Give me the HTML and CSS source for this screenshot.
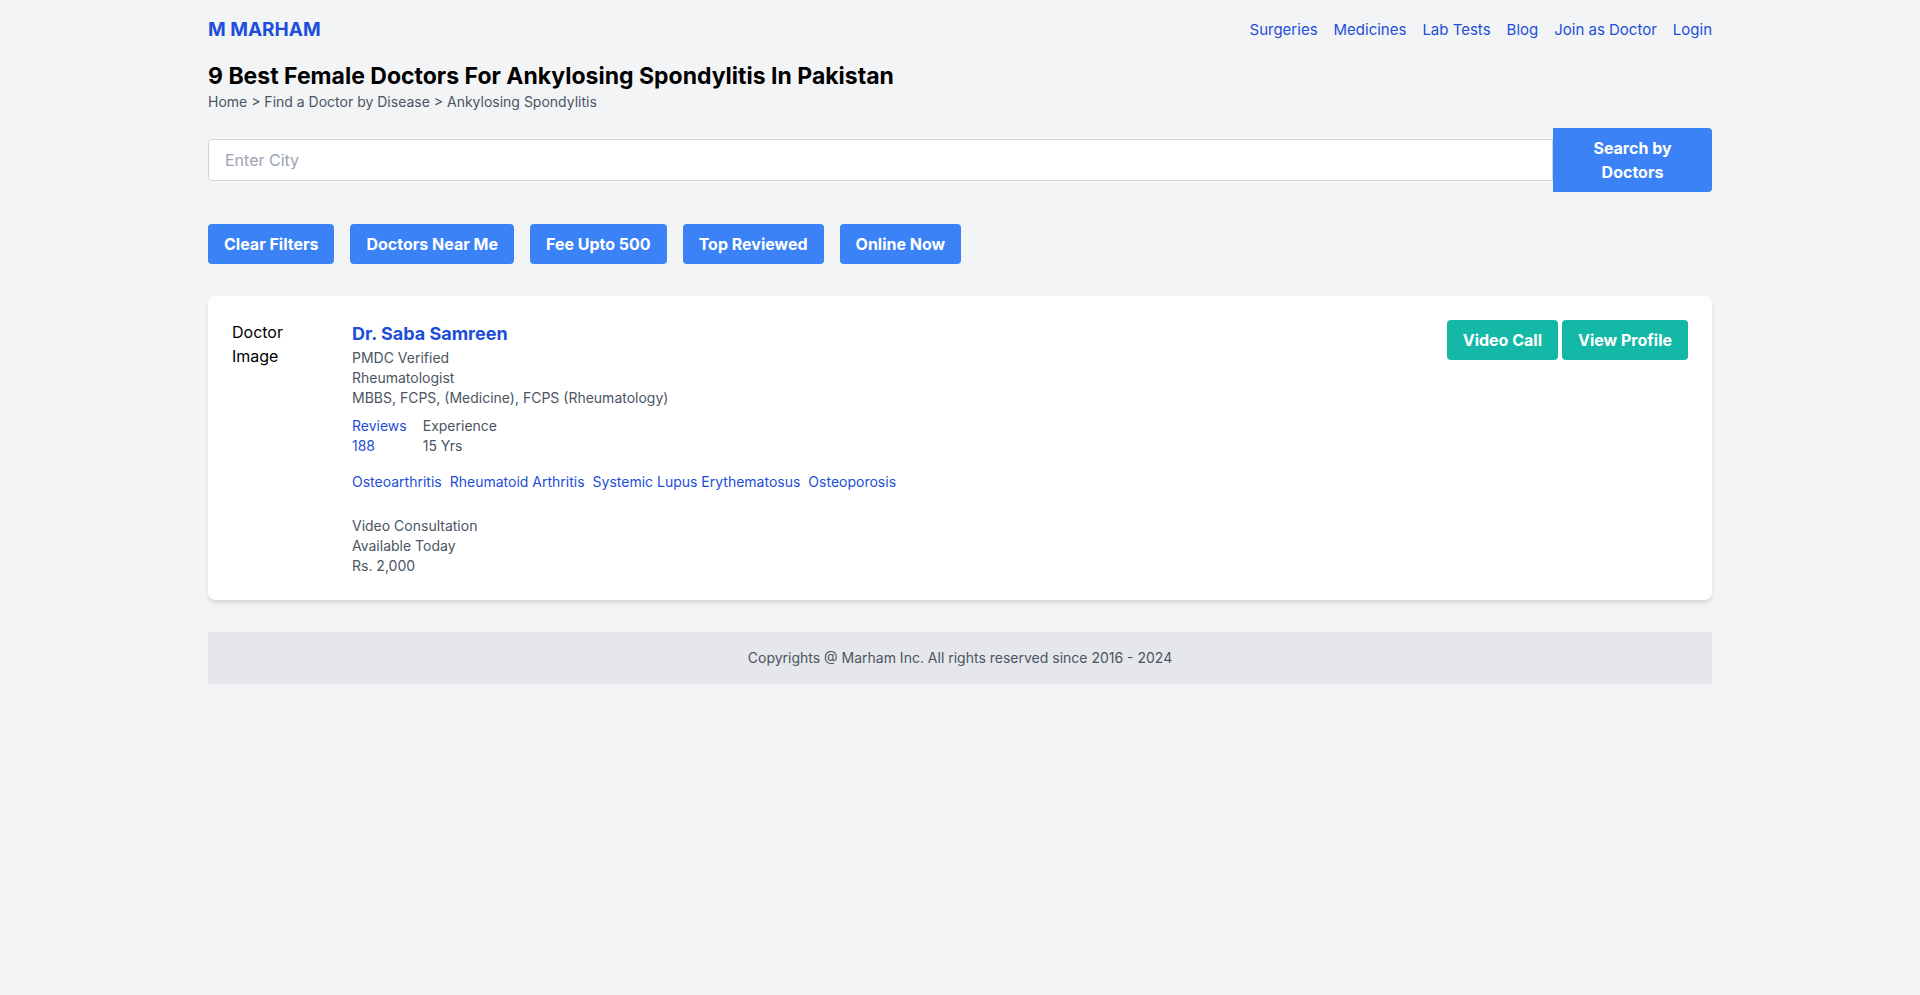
FILE: index.html
```html
<!DOCTYPE html>
<html lang="en">
<head>
<meta charset="utf-8">
<title>Marham</title>
<link rel="stylesheet" href="styles.css">
</head>
<body>
<div class="container">
  <header class="header">
    <a class="logo" href="#">M MARHAM</a>
    <nav class="nav">
      <a href="#">Surgeries</a>
      <a href="#">Medicines</a>
      <a href="#">Lab Tests</a>
      <a href="#">Blog</a>
      <a href="#">Join as Doctor</a>
      <a href="#">Login</a>
    </nav>
  </header>
  <main>
    <h1 class="title">9 Best Female Doctors For Ankylosing Spondylitis In Pakistan</h1>
    <p class="small">Home &gt; Find a Doctor by Disease &gt; Ankylosing Spondylitis</p>
    <form class="search">
      <input class="search-input" type="text" placeholder="Enter City" aria-label="Enter City">
      <button class="search-button" type="button">Search by Doctors</button>
    </form>
    <div class="filters">
      <button class="btn" type="button">Clear Filters</button>
      <button class="btn" type="button">Doctors Near Me</button>
      <button class="btn" type="button">Fee Upto 500</button>
      <button class="btn" type="button">Top Reviewed</button>
      <button class="btn" type="button">Online Now</button>
    </div>
    <article class="card">
      <div class="photo">Doctor Image</div>
      <div class="info">
        <h2 class="name">Dr. Saba Samreen</h2>
        <p class="small">PMDC Verified</p>
        <p class="small">Rheumatologist</p>
        <p class="small">MBBS, FCPS, (Medicine), FCPS (Rheumatology)</p>
        <div class="stats">
          <div class="small"><a href="#">Reviews<br>188</a></div>
          <div class="small">Experience<br>15 Yrs</div>
        </div>
        <div class="tags small">
          <a href="#">Osteoarthritis</a>
          <a href="#">Rheumatoid Arthritis</a>
          <a href="#">Systemic Lupus Erythematosus</a>
          <a href="#">Osteoporosis</a>
        </div>
        <div class="consult small">
          <p>Video Consultation</p>
          <p>Available Today</p>
          <p>Rs. 2,000</p>
        </div>
      </div>
      <div class="actions">
        <button class="btn btn-teal" type="button">Video Call</button>
        <button class="btn btn-teal" type="button">View Profile</button>
      </div>
    </article>
  </main>
  <footer class="footer small">Copyrights @ Marham Inc. All rights reserved since 2016 - 2024</footer>
</div>
</body>
</html>
```

FILE: styles.css
```css
*, *::before, *::after {
  box-sizing: border-box;
}

body {
  margin: 0;
  background: #f3f4f6;
  color: #000;
  font-family: Inter, "Liberation Sans", sans-serif;
  font-size: 16px;
  line-height: 24px;
}

h1, h2, p {
  margin: 0;
}

a {
  color: #1d4ed8;
  text-decoration: none;
}

button, input {
  font: inherit;
}

.container {
  max-width: 1536px;
  margin: 0 auto;
  padding: 16px;
}

.header {
  display: flex;
  justify-content: space-between;
  align-items: center;
  margin-bottom: 16px;
}

.logo {
  font-size: 19px;
  line-height: 28px;
  font-weight: 700;
}

.nav {
  display: flex;
  gap: 16px;
  font-size: 15px;
}

.title {
  font-size: 23px;
  line-height: 32px;
  font-weight: 700;
}

.small {
  color: #4b5563;
  font-size: 14px;
  line-height: 20px;
}

.search {
  display: flex;
  align-items: center;
  margin: 16px 0 32px;
}

.search-input {
  flex: 1;
  min-width: 0;
  padding: 8px 16px;
  background: #fff;
  border: 1px solid #d1d5db;
  border-radius: 4px 0 0 4px;
}

.search-input::placeholder {
  color: #9ca3af;
  opacity: 1;
}

.btn, .search-button {
  padding: 8px 16px;
  border: 0;
  border-radius: 4px;
  background: #3b82f6;
  color: #fff;
  font-weight: 700;
}

.search-button {
  width: 159px;
  border-radius: 0 4px 4px 0;
}

.filters {
  display: flex;
  flex-wrap: wrap;
  gap: 16px;
  margin-bottom: 32px;
}

.card {
  display: flex;
  padding: 24px;
  margin-bottom: 32px;
  border-radius: 8px;
  background: #fff;
  box-shadow: 0 4px 6px -1px rgb(0 0 0 / 0.1), 0 2px 4px -2px rgb(0 0 0 / 0.1);
}

.photo {
  width: 96px;
  margin-right: 24px;
}

.info {
  flex: 1;
}

.name {
  color: #1d4ed8;
  font-size: 18px;
  line-height: 28px;
  font-weight: 700;
}

.stats {
  display: flex;
  gap: 16px;
  margin-top: 8px;
}

.tags {
  display: flex;
  flex-wrap: wrap;
  gap: 8px;
  margin-top: 16px;
}

.consult {
  margin-top: 24px;
}

.actions {
  display: flex;
  align-items: flex-start;
  gap: 4px;
}

.btn-teal {
  background: #14b8a6;
}

.footer {
  padding: 16px;
  background: #e5e7eb;
  text-align: center;
}
```
